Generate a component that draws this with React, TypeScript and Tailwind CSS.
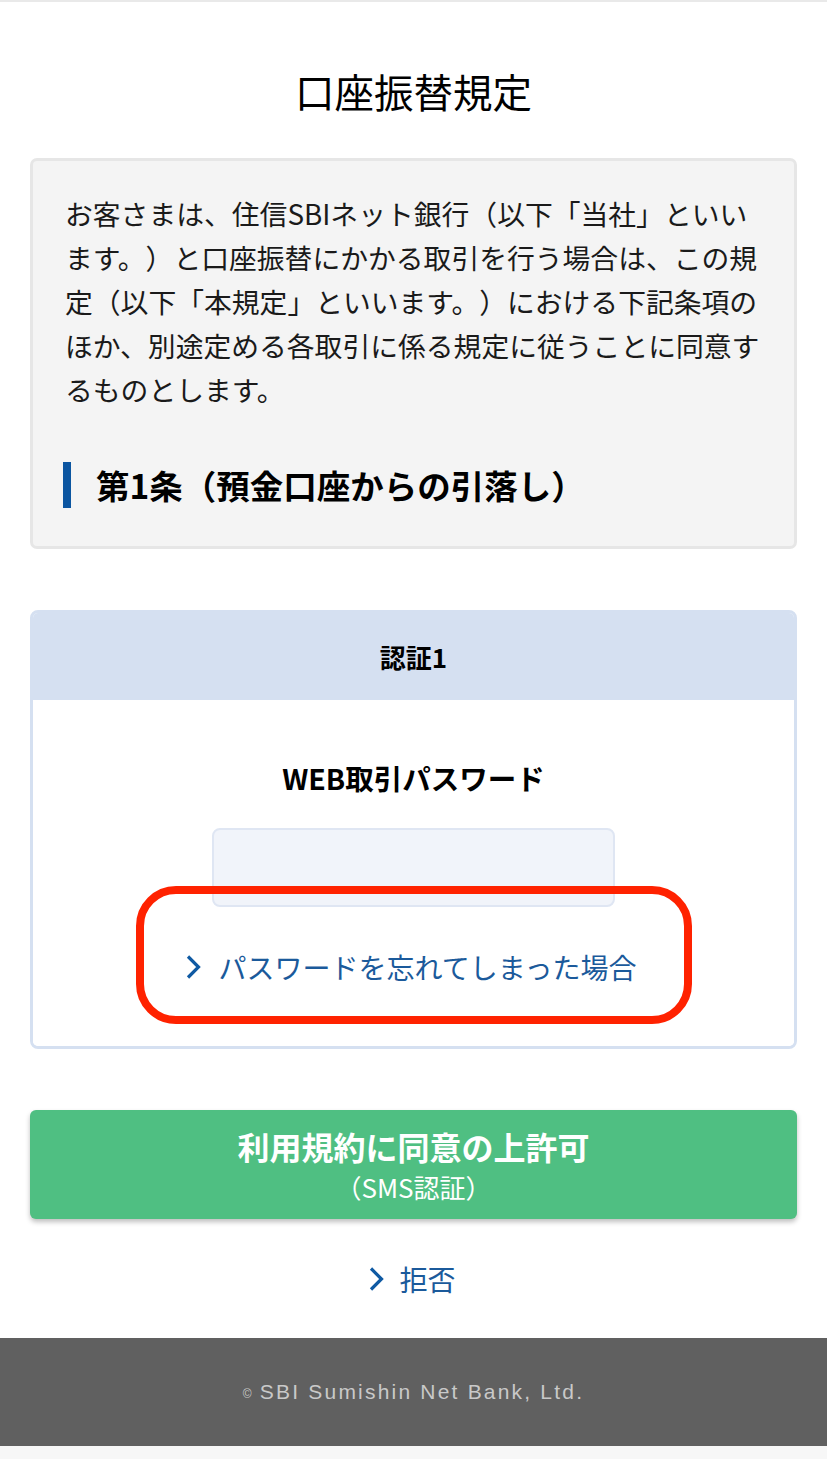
import React from "react";

const jp = "font-['Noto_Sans_CJK_JP','Noto_Sans',sans-serif] [text-spacing-trim:space-all]";

function Chevron({ className }: { className?: string }) {
  return (
    <svg viewBox="0 0 15 24" fill="none" className={className}>
      <polyline
        points="2,1.5 12.5,12 2,22.5"
        stroke="currentColor"
        strokeWidth="3.2"
        strokeLinecap="butt"
        strokeLinejoin="miter"
      />
    </svg>
  );
}

export default function App() {
  return (
    <div className={`${jp} bg-white text-black min-h-[1459px] flex flex-col`}>
      <div className="h-[2px] bg-[#e9e9e9]" />

      <div className="px-[30px]">
        {/* タイトル */}
        <h1 className="mt-[60px] mb-[39px] text-center text-[39.5px] leading-[57px] font-normal">
          口座振替規定
        </h1>

        {/* 規定本文 */}
        <div className="h-[391px] border-[3px] border-[#e6e6e6] bg-[#f4f4f4] rounded-[7px] pl-[32px] pr-[20px] pt-[30px] overflow-hidden">
          <p className="text-[27.8px] leading-[44px] text-[#1a1a1a] whitespace-nowrap">
            お客さまは、住信SBIネット銀行（以下「当社」といい
            <br />
            ます。）と口座振替にかかる取引を行う場合は、この規
            <br />
            定（以下「本規定」といいます。）における下記条項の
            <br />
            ほか、別途定める各取引に係る規定に従うことに同意す
            <br />
            るものとします。
          </p>
          <div className="mt-[51px] -ml-[2px] flex items-center border-l-[8px] border-[#0b55a0] h-[46px] pl-[25px]">
            <h2 className="text-[33.5px] leading-[46px] font-bold whitespace-nowrap">
              第1条（預金口座からの引落し）
            </h2>
          </div>
        </div>

        {/* 認証カード */}
        <div className="mt-[61px] h-[439px] border-[3px] border-[#d5e0f1] rounded-[8px] overflow-hidden flex flex-col">
          <div className="h-[87px] bg-[#d5e0f1] flex items-center justify-center">
            <span className="text-[26px] font-bold">認証1</span>
          </div>
          <div className="relative flex-1 bg-white flex flex-col items-center pt-[58px]">
            <div className="text-[28.5px] leading-[40px] font-bold">WEB取引パスワード</div>
            <div className="mt-[30px] w-[403px] h-[79px] bg-[#f1f4fa] border-[2px] border-[#dfe6f3] rounded-[8px]" />
            <a className="mt-[40px] flex items-center gap-[17px] text-[#1b5a9b] text-[28px] leading-[40px] -ml-[4px]">
              <Chevron className="w-[15px] h-[24px] text-[#0f5aa3]" />
              <span>パスワードを忘れてしまった場合</span>
            </a>
            <div className="absolute left-1/2 -translate-x-1/2 top-[186px] w-[556px] h-[138px] border-[8px] border-[#ff2200] rounded-[40px]" />
          </div>
        </div>

        {/* 許可ボタン */}
        <button className="mt-[61px] w-full h-[109px] bg-[#4fbf82] rounded-[6px] shadow-[0_3px_5px_rgba(0,0,0,0.25)] flex flex-col items-center justify-center text-white pt-[3px]">
          <span className="text-[32px] leading-[42px] font-bold">利用規約に同意の上許可</span>
          <span className="text-[26px] leading-[40px]">（SMS認証）</span>
        </button>

        {/* 拒否 */}
        <div className="h-[119px] flex items-center justify-center">
          <a className="flex items-center gap-[15px] text-[#1b5a9b] text-[28px] leading-[40px] -ml-[2px]">
            <Chevron className="w-[15px] h-[24px] text-[#0f5aa3]" />
            <span>拒否</span>
          </a>
        </div>
      </div>

      <footer className="h-[108px] bg-[#606060] flex items-center justify-center">
        <p className="font-['Liberation_Sans',sans-serif] text-[#c9c9c9] text-[21px] tracking-[2.2px]">
          <span className="text-[12px] align-middle mr-[6px]">©</span>SBI Sumishin Net Bank, Ltd.
        </p>
      </footer>
      <div className="h-[13px] bg-[#f7f7f7]" />
      <div className="flex-1 bg-white" />
    </div>
  );
}
